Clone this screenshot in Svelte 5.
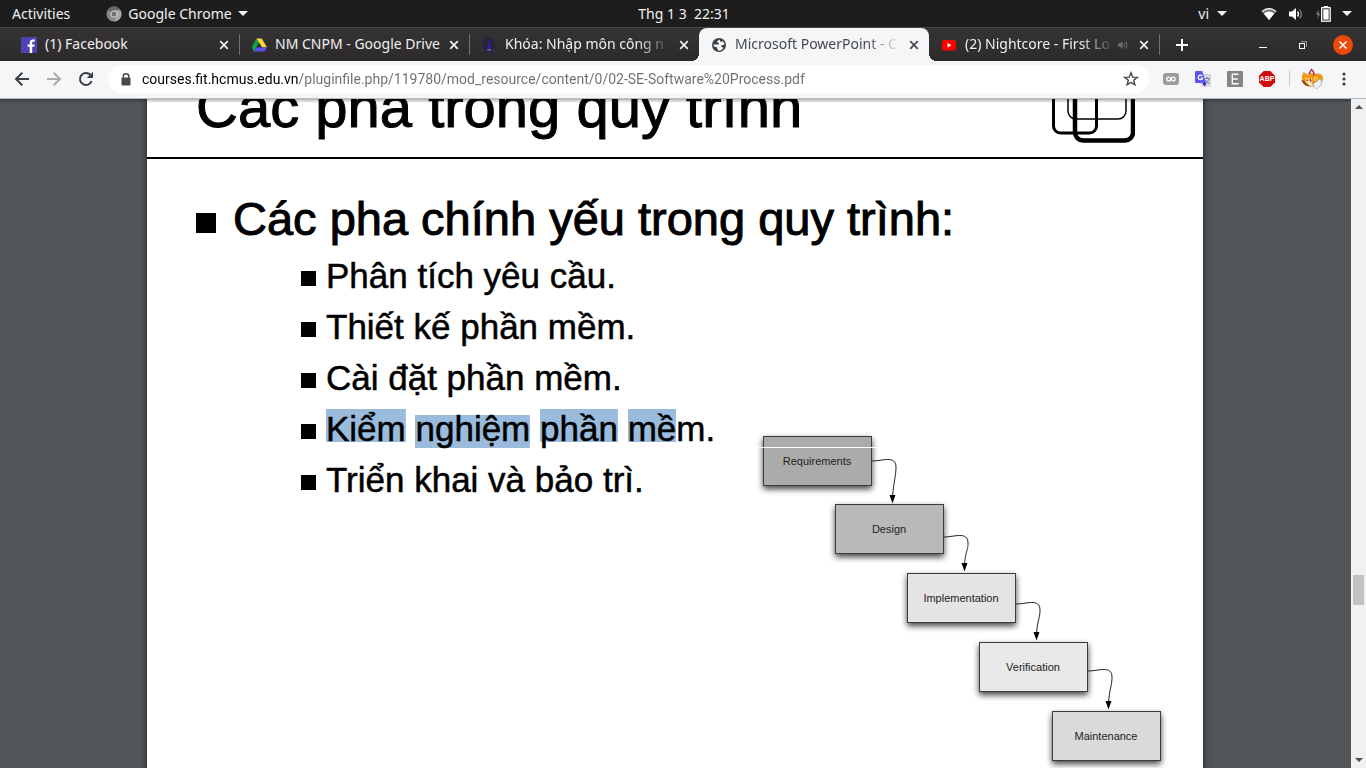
<script>
  const tabs = [
    { title: '(1) Facebook', icon: 'facebook' },
    { title: 'NM CNPM - Google Drive', icon: 'drive' },
    { title: 'Khóa: Nhập môn công n', icon: 'course' },
    { title: 'Microsoft PowerPoint - C', icon: 'globe', active: true },
    { title: '(2) Nightcore - First Lo', icon: 'youtube', audio: true }
  ];

  const phases = [
    { name: 'Requirements', x: 8, y: 6, fill: '#ababab', exit: 25 },
    { name: 'Design', x: 80, y: 74, fill: '#b9b9b9', exit: 33 },
    { name: 'Implementation', x: 152, y: 143, fill: '#e4e4e4', exit: 31 },
    { name: 'Verification', x: 224, y: 212, fill: '#e9e9e9', exit: 29 },
    { name: 'Maintenance', x: 297, y: 281, fill: '#dadada', exit: null }
  ];
</script>

<div class="screen">
  <header class="system">
    <div class="side">
      <button class="activities">Activities</button>
      <button class="app-menu">
        <svg width="16" height="16" viewBox="0 0 16 16" aria-hidden="true">
          <circle cx="8" cy="8" r="7.5" fill="#8a8a8a" />
          <path d="M8 8 1.5 4.2A7.5 7.5 0 0 1 14.5 4.3H8Z" fill="#6a6a6a" />
          <path d="M11 9.8 8 15.5A7.5 7.5 0 0 0 14.6 4.4H8Z" fill="#a8a8a8" />
          <circle cx="8" cy="8" r="3.6" fill="#d0d0d0" />
          <circle cx="8" cy="8" r="2.5" fill="#707070" />
        </svg>
        Google Chrome
        <span class="caret"></span>
      </button>
    </div>
    <button class="clock">Thg 1 3&nbsp; 22:31</button>
    <div class="side end">
      <button class="lang">vi <span class="caret"></span></button>
      <button class="status" aria-label="System">
        <svg width="16" height="14" viewBox="0 0 16 14">
          <path d="M.5 4.2Q8-2.2 15.5 4.2L8 13Z" fill="#777" />
          <path d="M.5 4.2Q8-2.2 15.5 4.2L14.8 5Q8-.4 1.2 5Z" fill="#fff" />
          <path d="M2.7 6.6Q8 2.2 13.3 6.6L8 13Z" fill="#fff" />
        </svg>
        <svg width="16" height="14" viewBox="0 0 16 14">
          <path d="M1 4.5h3L8 1v12L4 9.5H1Z" fill="#fff" />
          <path d="M9.5 4.5q2 2.5 0 5" fill="none" stroke="#fff" stroke-width="1.3" />
          <path d="M11.5 2.5q3.6 4.5 0 9" fill="none" stroke="#888" stroke-width="1.2" />
        </svg>
        <svg width="16" height="16" viewBox="0 0 16 16">
          <path d="M4 3.5 1 8.6h2L2.4 13 5 7.6H3.2Z" fill="#888" />
          <path d="M9 1.5V.5h4v1" fill="none" stroke="#fff" />
          <rect x="6.7" y="1.7" width="8.5" height="13.5" fill="none" stroke="#fff" stroke-width="1.3" />
          <rect x="8.3" y="3.3" width="5.4" height="10.3" fill="#fff" />
        </svg>
        <span class="caret"></span>
      </button>
    </div>
  </header>

  <nav class="tabs">
    {#each tabs as tab}
      <div class="tab" class:active={tab.active}>
        <svg class="favicon" width="16" height="16" viewBox="0 0 16 16" aria-hidden="true">
          {#if tab.icon === 'facebook'}
            <rect width="16" height="16" fill="#4d42b4" />
            <path d="M8.7 16V9.8H6.6V7.4h2.1V5.8c0-2.1 1.3-3.2 3.2-3.2h1.9v2.2h-1.3c-1 0-1.3.5-1.3 1.3v1.3h2.5l-.4 2.4h-2.1V16Z" fill="#fff" />
          {:else if tab.icon === 'drive'}
            <path d="M5.3 1.5h5.4L16 10.3h-5Z" fill="#fdd835" />
            <path d="M5.3 1.5 8 6 2.9 14.5.9 10Z" fill="#12a14b" />
            <path d="M5.4 10.3H16l-2.4 4.2H2.9Z" fill="#5b50ee" />
            <path d="M8 6 5.4 10.3H10.6Z" fill="#302e2d" />
          {:else if tab.icon === 'course'}
            <circle cx="8" cy="7.5" r="6.8" fill="#282431" stroke="#2d2751" />
            <path d="M1 13.500h2.500M12.500 13.500H15" stroke="#35267a" />
            <path d="M9 3 7.500 6.500l1.300 2.500" fill="none" stroke="#2a1fb0" stroke-width="1.300" />
            <path d="M6.300 10.200h3.500" stroke="#2a1fd0" stroke-width="2" />
            <path d="M6.300 12.800h3.700" stroke="#5a7fd8" stroke-width="1.400" />
          {:else if tab.icon === 'globe'}
            <circle cx="8" cy="8" r="7" fill="#3d4043" />
            <path d="M8.500 2.400c-1 1.400-2.600 1.200-2.400 2.600.2 1 1.600.6 2 1.500.3.900-1.500 1.100-2.600 1.100H2.300c.2 1.600 1 2.400 2.400 2.400 1 0 1.500.4 1.500 1.400 0 .8.900.9.900 2.200 2.600.3 4.400-1 5.400-2.800-1-.2-1.800-.3-2.200-1.200-.4-.800.4-1.600 1.400-1.700l1.900-.3C13.400 6.200 12.600 4.900 11.500 4c-.6.700-1 1-1.800.8-.8-.3-.2-1.500-1.200-2.400Z" fill="#f5f6f8" />
          {:else}
            <rect x="1" y="3" width="14" height="10.500" rx="2.500" fill="#f00" />
            <path d="M6.500 6v4.500l4-2.250Z" fill="#fff" />
          {/if}
        </svg>
        <button class="title">{tab.title}</button>
        {#if tab.audio}
          <svg class="audio" width="12" height="10" viewBox="0 0 12 10" aria-hidden="true">
            <path d="M1 3.500h2L5.500 1v8L3 6.500H1Z" fill="#6b6d71" />
            <path d="M7 3q1 2 0 4M9 1.500q2 3.500 0 7" fill="none" stroke="#6b6d71" />
          </svg>
        {/if}
        <button class="close" aria-label="Close tab">
          <svg width="10" height="10" viewBox="0 0 10 10"><path d="m1.200 1.200 7.600 7.600m0-7.600L1.200 8.800" stroke="currentColor" stroke-width="1.700" /></svg>
        </button>
      </div>
    {/each}
    <button class="new" aria-label="New tab">
      <svg width="12" height="12" viewBox="0 0 12 12"><path d="M6 0v12M0 6h12" stroke="#fff" stroke-width="2" /></svg>
    </button>
    <div class="window">
      <button aria-label="Minimize"><svg width="20" height="20" viewBox="0 0 20 20"><path d="M6 12.500h8" stroke="#fff" /></svg></button>
      <button aria-label="Restore">
        <svg width="20" height="20" viewBox="0 0 20 20" fill="none">
          <path d="M8 6.500h5.500V12" stroke="#999" /><rect x="6.500" y="8.500" width="5" height="5" stroke="#fff" />
        </svg>
      </button>
      <button aria-label="Close">
        <svg width="20" height="20" viewBox="0 0 20 20">
          <circle cx="10" cy="10" r="10" fill="#ec4a0a" /><path d="m6.500 6.500 7 7m0-7-7 7" stroke="#fff" stroke-width="1.500" />
        </svg>
      </button>
    </div>
  </nav>

  <div class="toolbar">
    <div class="history">
      <button aria-label="Back"><svg width="16" height="16" viewBox="0 0 16 16"><path d="M15 8H2M8.300 1.700 2 8l6.300 6.300" fill="none" stroke="#3c4043" stroke-width="2" /></svg></button>
      <button aria-label="Forward"><svg width="16" height="16" viewBox="0 0 16 16"><path d="M1 8h13M7.700 1.700 14 8l-6.300 6.300" fill="none" stroke="#a9abad" stroke-width="2" /></svg></button>
      <button aria-label="Reload">
        <svg width="16" height="16" viewBox="0 0 16 16"><path d="M13.600 10A6 6 0 1 1 12.300 3.800" fill="none" stroke="#3c4043" stroke-width="2" /><path d="M15 .8V7H8.800Z" fill="#3c4043" /></svg>
      </button>
    </div>
    <div class="address">
      <svg width="10" height="13" viewBox="0 0 10 13" aria-hidden="true">
        <path d="M2.200 5V3.400a2.800 2.600 0 0 1 5.600 0V5" fill="none" stroke="#46494d" stroke-width="1.400" /><rect x=".5" y="4.500" width="9" height="8" rx="1" fill="#46494d" />
      </svg>
      <input aria-label="Address" value="courses.fit.hcmus.edu.vn/pluginfile.php/119780/mod_resource/content/0/02-SE-Software%20Process.pdf" />
      <button aria-label="Bookmark">
        <svg width="16" height="16" viewBox="0 0 16 16"><path d="m8 1.800 1.700 4.300 4.600.3-3.600 2.900 1.200 4.500L8 11.300l-3.900 2.500 1.200-4.500-3.600-2.900 4.600-.3Z" fill="none" stroke="#46494d" stroke-width="1.400" /></svg>
      </button>
    </div>
    <div class="extensions">
      <button aria-label="Links"><svg width="16" height="16" viewBox="0 0 16 16"><rect y="2" width="16" height="12" rx="3" fill="#9b9b9b" /><circle cx="5.700" cy="8" r="1.900" fill="none" stroke="#fff" stroke-width="1.300" /><circle cx="10.300" cy="8" r="1.900" fill="none" stroke="#fff" stroke-width="1.300" /></svg></button>
      <button aria-label="Translate">
        <svg width="16" height="16" viewBox="0 0 16 16">
          <rect x="6" y="3" width="10" height="12.500" fill="#d5d7da" />
          <path d="M9.500 7.500h5.500M12.200 6v1.500M14 7.500c-.5 2.500-2 4-4 5M10.500 9c1 1.800 2 2.600 4 3.500" fill="none" stroke="#6b8b9b" />
          <path d="M7.500 12h4l-2 3.800Z" fill="#3c14c8" />
          <path d="M1.200 0h6l3.800 12H1.200Q0 12 0 10.800V1.200Q0 0 1.200 0Z" fill="#5a54f0" />
          <path d="M7.300 5A2.300 2.300 0 1 0 7.700 7H5.600" fill="none" stroke="#fff" stroke-width="1.200" />
        </svg>
      </button>
      <button aria-label="Extension E"><svg width="16" height="16" viewBox="0 0 16 16"><rect width="16" height="16" rx="1" fill="#858585" /><path d="M11.500 3.200H5.300v9.600h6.200M5.300 8h5.500" fill="none" stroke="#fff" stroke-width="1.400" /></svg></button>
      <button class="abp">
        <svg width="16" height="16" viewBox="0 0 16 16" aria-hidden="true"><path d="M4.700 0h6.600L16 4.700v6.600L11.300 16H4.700L0 11.300V4.700Z" fill="#d20a0a" /></svg>
        <span>ABP</span>
      </button>
    </div>
    <div class="profile">
      <button aria-label="Profile">
        <svg width="24" height="22" viewBox="0 0 24 22">
          <path d="M2 7.500 3.500 4l4 2.500Q11 4 15 6q6-2 8 3 .5 5-4 8-5 3-9 1-7-2-8-6Z" fill="#f39a1c" />
          <path d="M1.500 12q3 0 4 3l6 4-6-1.500Q2 15 1.500 12Z" fill="#8f420c" />
          <path d="M5 9q4 3 8 .500 0 5-3 7-4-2-5-7.500Z" fill="#ffcf55" />
          <path d="M5.500 13q3-.5 5 .5l3 4.500-4-.5Z" fill="#fff0d0" />
          <path d="M13 8q4-2 6.500 1-1 5-5.500 6-2-3-1-7Z" fill="#f7b733" stroke="#c96f10" stroke-width=".7" />
          <path d="M13 15q4 0 6-4l3 2q0 5-5.500 8-3-2-3.500-6Z" fill="#eef3f7" stroke="#8b97a3" stroke-width=".6" />
          <path d="m9 6 2.500-4.500Q14 3 14 7M10 11l1 2.500M6.500 12l1.500.500" fill="none" stroke="#b3175a" stroke-width="1.300" />
        </svg>
      </button>
      <button aria-label="Menu"><svg width="4" height="16" viewBox="0 0 4 16" fill="#3c4043"><circle cx="2" cy="3" r="1.600" /><circle cx="2" cy="8" r="1.600" /><circle cx="2" cy="13" r="1.600" /></svg></button>
    </div>
  </div>

  <main class="viewer">
    <div class="stage">
      <article class="slide">
        <header class="heading">
          <h1>Các pha trong quy trình</h1>
          <svg width="84" height="84" viewBox="0 0 84 84" fill="none" stroke="#000" aria-hidden="true">
            <rect x="2.500" y="20" width="43" height="54" rx="7" stroke-width="3" />
            <rect x="17" y="6" width="58" height="54" rx="8" stroke-width="1.500" />
            <rect x="24" y="14" width="58" height="67.500" rx="8" stroke-width="4.500" />
          </svg>
        </header>
        <section>
          <h2>Các pha chính yếu trong quy trình:</h2>
          <ul>
            <li>Phân tích yêu cầu.</li>
            <li>Thiết kế phần mềm.</li>
            <li>Cài đặt phần mềm.</li>
            <li><mark class="high">Kiểm</mark> <mark class="low">nghiệm</mark> <mark class="high">phần</mark> <mark class="high">mề</mark>m.</li>
            <li>Triển khai và bảo trì.</li>
          </ul>
        </section>
        <svg class="diagram" width="420" height="345" viewBox="0 0 420 345">
          <defs>
            <filter id="shade" x="-10%" y="-10%" width="120%" height="140%"><feDropShadow dx="0" dy="3" stdDeviation="3" flood-opacity=".75" /></filter>
          </defs>
          {#each phases as p}
            <g transform="translate({p.x} {p.y})">
              <rect x=".5" y=".5" width="108" height="49" fill={p.fill} stroke="#3a3a3a" filter="url(#shade)" />
              <text x="54" y="29" text-anchor="middle">{p.name}</text>
              {#if p.exit}
                <path d="M109 {p.exit}C119 {p.exit} 133 {p.exit - 6} 133 {p.exit + 6}C133 {p.exit + 14} 131 45 129.500 60" fill="none" stroke="#222" />
                <path d="M126.500 59h6l-3 8.500Z" fill="#000" />
              {/if}
            </g>
          {/each}
          <path d="M3 17.500h122" stroke="#fff" />
        </svg>
      </article>
    </div>
    <div class="scroll" aria-hidden="true">
      <span class="arrow up"></span>
      <span class="thumb"></span>
      <span class="arrow down"></span>
    </div>
  </main>
</div>

<style>
  :global(body) { margin: 0; }
  .screen {
    display: flex;
    flex-direction: column;
    height: 100vh;
    overflow: hidden;
    font-family: "Noto Sans", "Open Sans", sans-serif;
    font-size: 14px;
    line-height: 20px;
  }
  button {
    display: flex;
    align-items: center;
    padding: 0;
    border: 0;
    background: none;
    color: inherit;
    font: inherit;
    white-space: nowrap;
  }
  svg { display: block; flex: none; }

  .system {
    display: flex;
    align-items: center;
    height: 27px;
    flex: none;
    padding: 0 14px 0 12px;
    background: #1d1d1d;
    color: #f2f2f2;
  }
  .side { display: flex; flex: 1; align-items: center; gap: 36px; }
  .end { justify-content: flex-end; gap: 34px; }
  .app-menu { gap: 6px; }
  .lang { gap: 8px; }
  .status { gap: 11px; }
  .clock { margin-left: 4px; }
  .caret {
    border: 5px solid transparent;
    border-top-color: #f2f2f2;
    border-bottom: 0;
  }

  .tabs {
    display: flex;
    height: 34px;
    flex: none;
    padding: 0 13px 0 9px;
    box-sizing: border-box;
    border-top: 1px solid #4a4844;
    background: linear-gradient(#353332, #2d2a2c);
    color: #f0f0f0;
  }
  .tab {
    position: relative;
    display: flex;
    align-items: center;
    flex: 0 1 230px;
    min-width: 0;
    box-sizing: border-box;
    padding: 0 10px 0 12px;
  }
  .tab:nth-child(1)::after, .tab:nth-child(2)::after, .tab:nth-child(5)::after {
    content: "";
    position: absolute;
    right: -1px;
    top: 6px;
    width: 1px;
    height: 21px;
    background: #737170;
  }
  .favicon { margin-right: 8px; }
  .title {
    display: block;
    flex: 1;
    min-width: 0;
    overflow: hidden;
    padding-bottom: 2px;
    text-align: left;
    mask-image: linear-gradient(to right, #000 calc(100% - 36px), transparent calc(100% - 2px));
  }
  .tab:nth-child(-n + 2) .title { mask-image: none; }
  .audio { margin-right: 4px; }
  .close { margin-left: 6px; }
  .active {
    border-radius: 8px 8px 0 0;
    background: #f5f6f8;
    color: #45484c;
  }
  .active::before, .active::after {
    content: "";
    position: absolute;
    bottom: 0;
    width: 8px;
    height: 8px;
  }
  .active::before { left: -8px; background: radial-gradient(circle at 0 0, transparent 8px, #f5f6f8 8px); }
  .active::after { right: -8px; background: radial-gradient(circle at 100% 0, transparent 8px, #f5f6f8 8px); }
  .new { margin-left: 17px; }
  .window { display: flex; gap: 20px; margin-left: auto; }

  .toolbar {
    display: flex;
    align-items: center;
    height: 38px;
    flex: none;
    box-sizing: border-box;
    border-bottom: 1px solid #b4bcc4;
    padding: 0 20px 1px 14px;
    background: #f5f6f8;
  }
  .history { display: flex; gap: 16px; }
  .address {
    display: flex;
    align-items: center;
    flex: 1;
    height: 28px;
    margin: 0 14px;
    padding: 0 10px 0 13px;
    border-radius: 14px;
    background: #fff;
  }
  input {
    flex: 1;
    min-width: 0;
    margin: 0 11px;
    padding: 0;
    border: 0;
    outline: 0;
    font: 14px/20px Roboto, sans-serif;
    color: transparent;
    background: linear-gradient(to right, #000 156px, #6b6e72 156px);
    background-clip: text;
  }
  .extensions { display: flex; gap: 16px; padding-right: 14px; border-right: 1px solid #c8cacd; }
  .abp { position: relative; }
  .abp span {
    position: absolute;
    inset: 0;
    text-align: center;
    color: #fff;
    font: bold 7px/16px "Liberation Sans", sans-serif;
  }
  .profile { display: flex; align-items: center; gap: 18px; padding-left: 10px; }

  .viewer { display: flex; flex: 1; min-height: 0; }
  .stage {
    position: relative;
    display: flex;
    justify-content: center;
    align-items: flex-start;
    flex: 1;
    overflow: hidden;
    padding-right: 1px;
    background: #525659;
  }
  .stage::before {
    content: "";
    position: absolute;
    z-index: 1;
    inset: 0 0 auto;
    height: 4px;
    background: linear-gradient(rgba(0, 0, 0, .3), transparent);
  }
  .slide {
    position: relative;
    flex: 0 1 1056px;
    min-height: 792px;
    margin-top: -60px;
    background: #fff;
    box-shadow: 0 0 6px 1px rgba(0, 0, 0, .5);
    color: #000;
    font-family: "Liberation Sans", Arial, sans-serif;
  }
  h1, h2, li { -webkit-text-stroke: 1px #000; paint-order: stroke fill; }
  .heading {
    display: flex;
    justify-content: space-between;
    align-items: flex-end;
    height: 118px;
    box-sizing: content-box;
    border-bottom: 2px solid #000;
    padding: 0 68px 0 49px;
  }
  .heading svg { margin-bottom: 14px; }
  h1, h2 { margin: 0; font-weight: 400; }
  h1 { padding-bottom: 16px; font-size: 58px; line-height: 68px; }
  section { padding: 32px 49px; }
  h2 {
    display: flex;
    align-items: center;
    gap: 17px;
    font-size: 47px;
    line-height: 56px;
  }
  h2::before { content: ""; width: 20px; height: 20px; margin-top: 8px; background: #000; }
  ul { margin: 3px 0 0; padding: 0 0 0 105px; list-style: none; }
  li { font-size: 35px; line-height: 51px; white-space: nowrap; -webkit-text-stroke-width: .5px; }
  li::before { content: ""; display: inline-block; width: 15px; height: 15px; margin-right: 10px; vertical-align: 2px; background: #000; }
  mark {
    color: inherit;
    background: linear-gradient(#9abbdb, #9abbdb) no-repeat;
    background-size: 100% 33px;
  }
  .high { background-position: top; }
  .low { background-position: bottom; }
  .diagram { position: absolute; left: 608px; top: 391px; }
  .diagram text { font: 11px "Liberation Sans", sans-serif; fill: #222; }

  .scroll {
    display: flex;
    flex-direction: column;
    align-items: center;
    width: 15px;
    box-sizing: border-box;
    padding: 6px 0;
    background: #f1f1f1;
  }
  .arrow { border: 4px solid transparent; }
  .up { border-top: 0; border-bottom-color: #505050; }
  .down { border-bottom: 0; border-top-color: #505050; margin-top: auto; }
  .thumb { width: 11px; height: 30px; margin-top: calc(50vh + 82px); background: #c1c1c1; }
</style>
